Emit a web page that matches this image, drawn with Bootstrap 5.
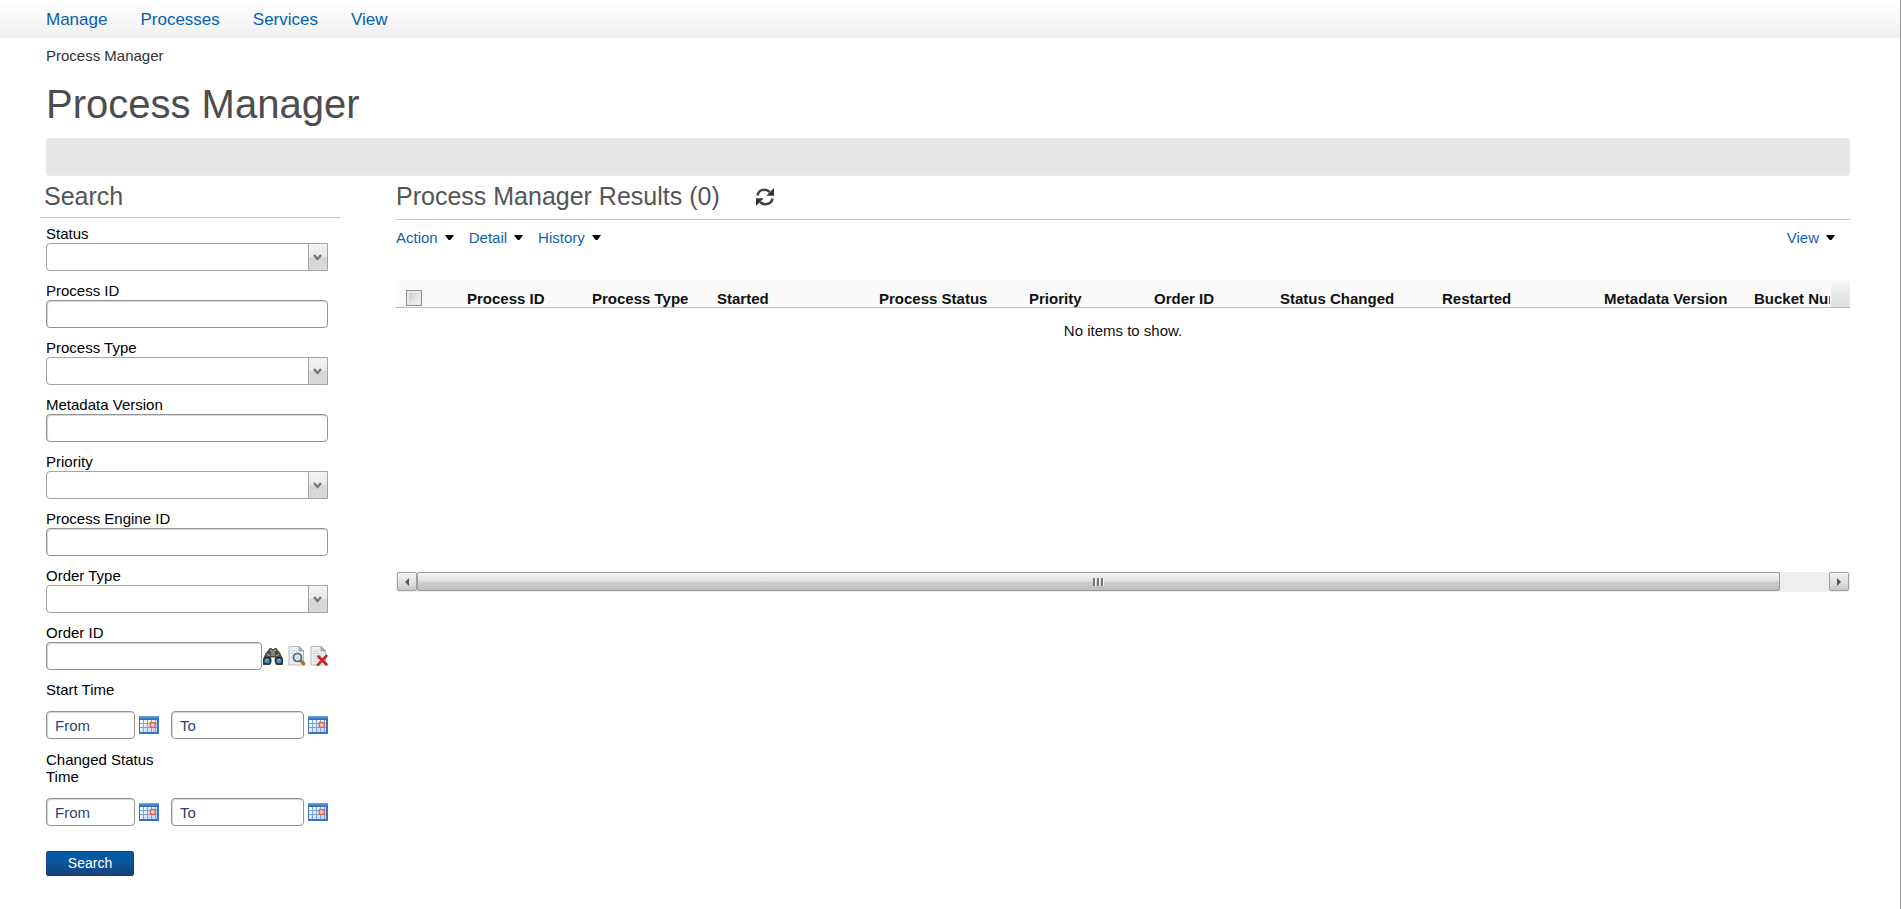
<!DOCTYPE html>
<html lang="en">
<head>
<meta charset="utf-8">
<meta name="viewport" content="width=device-width, initial-scale=1">
<title>Process Manager</title>
<link href="https://cdn.jsdelivr.net/npm/bootstrap@5.3.0/dist/css/bootstrap.min.css" rel="stylesheet">
<style>
  body { font-family: "Liberation Sans", Arial, sans-serif; font-size: 15px; line-height: 17px; color: #111; background: #fff; }
  a { color: #0f62b0; text-decoration: none; }
  .page { border-right: 1px solid #979797; }
  .topbar { height: 38px; background: linear-gradient(#fff, #f1f1f1); padding: 0 46px; gap: 33px; font-size: 17px; }
  .topbar .nav-link { color: #0461af; padding: 0; }
  .content { padding: 9px 50px 0 46px; }
  .crumbs { color: #333; }
  .page-title { font-size: 40px; line-height: 46px; color: #4d4d4d; margin: 17px 0 11px; font-weight: 400; }
  .strip { height: 38px; background: #e5e5e5; border: 1px solid #eaeaea; border-radius: 3px; }
  .panel-title { font-size: 25px; line-height: 29px; color: #555; font-weight: 400; margin: 0; }
  .search-panel { width: 300px; margin: 6px 56px 0 -6px; }
  .search-head { padding: 0 4px 6px; border-bottom: 1px solid #c6c6c6; }
  .search-form { padding: 7px 12px 0 6px; }
  .field { margin-bottom: 11px; }
  .field label { display: block; height: 18px; font-size: 15px; line-height: 17px; margin: 0; color: #000; }
  .field-box { height: 28px; padding: 0 8px; font-size: 15px; border: 1px solid #939393; border-radius: 4px; color: #2b4570; box-shadow: inset 1px 1px 1px #d4d4d4; background: #fff; min-width: 0; }
  .field-box::placeholder { color: #2b4570; opacity: 1; }
  .field-pick { height: 28px; border: 1px solid #a3a3a8; border-radius: 4px 0 0 4px; appearance: none; padding: 0 24px 0 7px;
    background: url("data:image/svg+xml,%3Csvg xmlns='http://www.w3.org/2000/svg' width='9' height='7'%3E%3Cpath d='M1 1l3.500 4L8 1' fill='none' stroke='%23777' stroke-width='2.400'/%3E%3C/svg%3E") right 5px top 10px no-repeat,
    linear-gradient(#a3a3a8, #a3a3a8) right 18px top 0 / 1px 100% no-repeat,
    linear-gradient(#f4f4f4, #e8e8e8 50%, #d6d6d6 51%, #d9d9d9) right top / 18px 100% no-repeat, #fff; }
  .icon-btn { border: 0; background: none; padding: 0; line-height: 0; flex: none; }
  .icon-btn svg { display: block; }
  .time-group { border: 0; margin: 0 0 12px; min-width: 0; }
  .time-group legend { float: none; width: 120px; font-size: 15px; line-height: 17px; margin: 0 0 13px; color: #000; }
  .from-box { width: 89px; flex: none; }
  .to-box { flex: 1 1 0; margin-left: 8px; }
  .go-btn { width: 88px; height: 25px; margin-top: 13px; padding: 0; font-size: 14px; line-height: 23px; color: #fff; border: 1px solid #164380; border-radius: 2px; background: linear-gradient(#025ba6, #05599f 40%, #17407a); }
  .results { flex: 1 1 0; min-width: 0; margin-top: 6px; }
  .results-head { padding-bottom: 8px; border-bottom: 1px solid #c6c6c6; gap: 36px; }
  .tools { margin: 9px 15px 34px 0; gap: 15px; }
  .tool-link { display: inline-flex; align-items: center; gap: 7px; height: 17px; }
  .tool-link svg { display: block; }
  .grid-head { border-bottom: 1px solid #b5bac6; height: 28px; background: #fafafa; }
  .grid-view { flex: 1 1 0; overflow: hidden; }
  .grid-table { table-layout: fixed; width: 1509px; border-collapse: collapse; }
  .grid-table th { height: 27px; padding: 10px 0 0; font-weight: 700; vertical-align: top; white-space: nowrap; color: #111; }
  .grid-table th:first-child { padding-left: 10px; }
  .all-box { display: block; appearance: none; width: 16px; height: 16px; margin: 0; border: 1px solid #8e8f8f; background: linear-gradient(135deg, #c6cad0, #f6f6f6) 2px 2px / 10px 10px no-repeat #e9e9e9; }
  .grid-corner { width: 20px; border-left: 1px solid #fff; background: linear-gradient(#fafafa, #e9e9e9 50%, #e0e0e0); }
  .grid-body { min-height: 264px; padding-top: 14px; }
  .hscroll { height: 20px; padding: 0 1px; background: #eee; }
  .hs-btn { width: 20px; border: 1px solid #a0a0a0; border-radius: 2px; background: linear-gradient(#f3f3f3, #e2e2e4 50%, #c9c9cc); padding: 0; }
  .hs-btn svg { display: block; margin: auto; }
  .hs-track { flex: 1 1 0; }
  .hs-thumb { border: 1px solid #999; border-radius: 2px; background: linear-gradient(#f3f3f3, #e3e3e5 45%, #cdcdd0 55%, #bdbdc0); }
  .hs-track, .hs-thumb, .hs-btn { height: 19px; }
</style>
</head>
<body>
<svg width="0" height="0" class="position-absolute" aria-hidden="true">
  <defs>
    <linearGradient id="calTop" x2="0" y2="1"><stop offset="0" stop-color="#6ea4de"/><stop offset="1" stop-color="#2a66b4"/></linearGradient>
    <linearGradient id="calBody" x2="1" y2="1"><stop offset="0" stop-color="#fff"/><stop offset="1" stop-color="#b9d0ee"/></linearGradient>
    <symbol id="cal" viewBox="0 0 20 18">
      <rect width="20" height="18" fill="#3a72bd"/><rect width="20" height="4" fill="url(#calTop)"/>
      <path d="M1 4h17v12H1z" fill="url(#calBody)"/>
      <path d="M1 7.500h17M1 11.500h17M4.500 4v12M8.500 4v12M12.500 4v12M16.500 4v12" stroke="#7ea4da" stroke-width="1"/>
      <rect x="11.500" y="6.700" width="4.600" height="4.600" fill="#fbdcd2" stroke="#e2664a" stroke-width="1.500"/>
    </symbol>
    <symbol id="down" viewBox="0 0 9 5"><path d="M0 0h9L5.500 5h-2z" fill="#000"/></symbol>
    <symbol id="sheet" viewBox="0 0 18 20">
      <path d="M1 .5h10l4.500 4.500v14H1z" fill="#eff0f1" stroke="#b4b8bb"/><path d="M11 .5V5h4.500z" fill="#a9b9c0" stroke="#8497a0" stroke-width=".8"/>
      <path d="M3 5h6M3 7.500h9M3 10h9M3 12.500h9M3 15h8" stroke="#cdd1d4"/>
    </symbol>
  </defs>
</svg>
<div class="page min-vh-100">
  <nav class="topbar nav align-items-center" aria-label="Main">
    <a class="nav-link" href="#">Manage</a><a class="nav-link" href="#">Processes</a><a class="nav-link" href="#">Services</a><a class="nav-link" href="#">View</a>
  </nav>
  <main class="content">
    <div class="crumbs">Process Manager</div>
    <h1 class="page-title">Process Manager</h1>
    <div class="strip"></div>
    <div class="d-flex align-items-start">
      <aside class="search-panel flex-shrink-0">
        <div class="search-head"><h2 class="panel-title">Search</h2></div>
        <form class="search-form">
          <div class="field"><label for="status">Status</label><select class="field-pick d-block w-100" id="status"><option></option></select></div>
          <div class="field"><label for="pid">Process ID</label><input class="field-box d-block w-100" id="pid" type="text"></div>
          <div class="field"><label for="ptype">Process Type</label><select class="field-pick d-block w-100" id="ptype"><option></option></select></div>
          <div class="field"><label for="meta">Metadata Version</label><input class="field-box d-block w-100" id="meta" type="text"></div>
          <div class="field"><label for="prio">Priority</label><select class="field-pick d-block w-100" id="prio"><option></option></select></div>
          <div class="field"><label for="engine">Process Engine ID</label><input class="field-box d-block w-100" id="engine" type="text"></div>
          <div class="field"><label for="otype">Order Type</label><select class="field-pick d-block w-100" id="otype"><option></option></select></div>
          <div class="field"><label for="oid">Order ID</label>
            <div class="d-flex align-items-center">
              <input class="field-box flex-grow-1" id="oid" type="text">
              <button class="icon-btn" type="button" aria-label="Find order">
                <svg width="22" height="18" viewBox="0 0 22 18"><path d="M7 1.500 9 .8l1.200 1.200h1.600L13 .8l2 .7 1 2 2.300 2.500 2.700 6v3a3.500 3.500 0 0 1-7.500 1.500L13 10.500H9l-.5 6A3.500 3.500 0 0 1 1 15v-3l2.700-6L6 3.500z" fill="#4b4a42"/><path d="M8 3l2 1v5M14 3l-2 1v5M5 7l3 2M17 7l-3 2" stroke="#aaa798" stroke-width="1.300" fill="none"/><ellipse cx="5.300" cy="13.600" rx="4.300" ry="3.900" fill="#282f35"/><ellipse cx="16.900" cy="13.600" rx="4.300" ry="3.900" fill="#282f35"/><ellipse cx="5" cy="13.900" rx="2.600" ry="2.400" fill="#4793b8"/><ellipse cx="17" cy="13.900" rx="2.600" ry="2.400" fill="#4793b8"/><path d="M4 13.200l2-1M16 13.200l2-1" stroke="#9fd0e2"/></svg>
              </button>
              <button class="icon-btn ms-1" type="button" aria-label="View order">
                <svg width="18" height="20" viewBox="0 0 18 20"><use href="#sheet" width="18" height="20"/><path d="M12.500 14.500l3.200 3.200" stroke="#9c7a42" stroke-width="3.400" stroke-linecap="round"/><circle cx="9.500" cy="11.500" r="4" fill="#cfe3f1" stroke="#59676f" stroke-width="1.700"/></svg>
              </button>
              <button class="icon-btn ms-1" type="button" aria-label="Clear order">
                <svg width="18" height="20" viewBox="0 0 18 20"><use href="#sheet" width="18" height="20"/><path d="M8.500 10.500l8 8M16.300 10l-8.500 8.800" stroke="#cf1e25" stroke-width="2.600" stroke-linecap="round"/></svg>
              </button>
            </div>
          </div>
          <fieldset class="time-group"><legend>Start Time</legend>
            <div class="d-flex align-items-center gap-1">
              <input class="field-box from-box" type="text" placeholder="From" aria-label="Start time from">
              <button class="icon-btn" type="button" aria-label="Pick date"><svg width="20" height="18"><use href="#cal"/></svg></button>
              <input class="field-box to-box" type="text" placeholder="To" aria-label="Start time to">
              <button class="icon-btn" type="button" aria-label="Pick date"><svg width="20" height="18"><use href="#cal"/></svg></button>
            </div>
          </fieldset>
          <fieldset class="time-group"><legend>Changed Status Time</legend>
            <div class="d-flex align-items-center gap-1">
              <input class="field-box from-box" type="text" placeholder="From" aria-label="Changed status time from">
              <button class="icon-btn" type="button" aria-label="Pick date"><svg width="20" height="18"><use href="#cal"/></svg></button>
              <input class="field-box to-box" type="text" placeholder="To" aria-label="Changed status time to">
              <button class="icon-btn" type="button" aria-label="Pick date"><svg width="20" height="18"><use href="#cal"/></svg></button>
            </div>
          </fieldset>
          <button class="go-btn" type="button">Search</button>
        </form>
      </aside>
      <section class="results">
        <div class="results-head d-flex align-items-center">
          <h2 class="panel-title">Process Manager Results (0)</h2>
          <button class="icon-btn" type="button" aria-label="Refresh">
            <svg width="18" height="18" viewBox="0 0 18 18"><path d="M1.500 7.500C2 4 5 1.800 8.500 1.800c2.200 0 4 .8 5.300 2.200M16.500 10.500C16 14 13 16.200 9.500 16.200c-2.200 0-4-.8-5.300-2.200" fill="none" stroke="#444" stroke-width="2.600"/><path d="M18 0v7.700h-7.700zM0 18v-7.700h7.700z" fill="#333"/></svg>
          </button>
        </div>
        <div class="tools d-flex">
          <a class="tool-link" href="#">Action <svg width="9" height="5"><use href="#down"/></svg></a>
          <a class="tool-link" href="#">Detail <svg width="9" height="5"><use href="#down"/></svg></a>
          <a class="tool-link" href="#">History <svg width="9" height="5"><use href="#down"/></svg></a>
          <a class="tool-link ms-auto" href="#">View <svg width="9" height="5"><use href="#down"/></svg></a>
        </div>
        <div class="grid-head d-flex">
          <div class="grid-view">
            <table class="grid-table">
              <colgroup><col style="width:71px"><col style="width:125px"><col style="width:125px"><col style="width:162px"><col style="width:150px"><col style="width:125px"><col style="width:126px"><col style="width:162px"><col style="width:162px"><col style="width:150px"><col style="width:151px"></colgroup>
              <thead><tr>
                <th><input class="all-box" type="checkbox" aria-label="Select all"></th>
                <th>Process ID</th><th>Process Type</th><th>Started</th><th>Process Status</th><th>Priority</th><th>Order ID</th><th>Status Changed</th><th>Restarted</th><th>Metadata Version</th><th>Bucket Number</th>
              </tr></thead>
            </table>
          </div>
          <div class="grid-corner"></div>
        </div>
        <div class="grid-body text-center">No items to show.</div>
        <div class="hscroll d-flex">
          <button class="hs-btn" type="button" aria-label="Scroll left"><svg width="4" height="8"><path d="M4 0v8L0 4z" fill="#555"/></svg></button>
          <div class="hs-track">
            <div class="hs-thumb d-flex align-items-center justify-content-center" style="width:96.500%">
              <svg width="12" height="8"><path d="M1 0h2v8H1zM5 0h2v8H5zM9 0h2v8H9z" fill="#777"/><path d="M3 0h1v8H3zM7 0h1v8H7zM11 0h1v8h-1z" fill="#f5f5f5"/></svg>
            </div>
          </div>
          <button class="hs-btn" type="button" aria-label="Scroll right"><svg width="4" height="8"><path d="M0 0v8l4-4z" fill="#555"/></svg></button>
        </div>
      </section>
    </div>
  </main>
</div>
<script src="https://cdn.jsdelivr.net/npm/bootstrap@5.3.0/dist/js/bootstrap.bundle.min.js"></script>
</body>
</html>
